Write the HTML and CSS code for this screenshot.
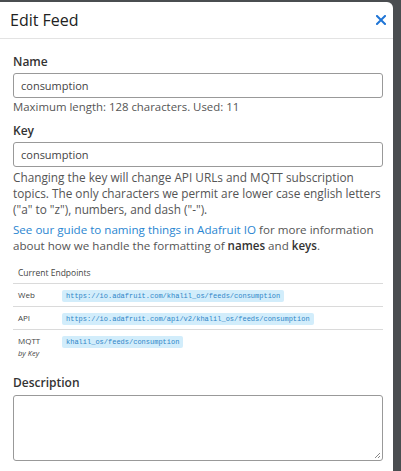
FILE: index.html
```html
<!DOCTYPE html>
<html>
<head>
<meta charset="utf-8">
<link rel="stylesheet" href="styles.css">
</head>
<body>
<div class="modal">
  <div class="modal-header">
    <h1 class="title">Edit Feed</h1>
    <button class="close" aria-label="Close">
      <svg width="10" height="10" viewBox="0 0 10 10"><path d="M1 1L9 9M9 1L1 9" stroke="#1f75d6" stroke-width="2" stroke-linecap="square"/></svg>
    </button>
  </div>
  <div class="modal-body">
    <label class="label">Name</label>
    <div class="input">consumption</div>
    <p class="help">Maximum length: 128 characters. Used: 11</p>

    <label class="label label-gap">Key</label>
    <div class="input">consumption</div>
    <p class="help para">Changing the key will change API URLs and MQTT subscription topics. The only characters we permit are lower case english letters ("a" to "z"), numbers, and dash ("-").</p>
    <p class="help para2"><a class="link">See our guide to naming things in Adafruit IO</a> for more information about how we handle the formatting of <b>names</b> and <b>keys</b>.</p>

    <div class="endpoints">
      <div class="caption">Current Endpoints</div>
      <div class="row">
        <div class="row-label">Web</div>
        <div><code class="chip">https://io.adafruit.com/khalil_os/feeds/consumption</code></div>
      </div>
      <div class="row">
        <div class="row-label">API</div>
        <div><code class="chip">https://io.adafruit.com/api/v2/khalil_os/feeds/consumption</code></div>
      </div>
      <div class="row row-last">
        <div class="row-label">MQTT<br><i>by Key</i></div>
        <div><code class="chip">khalil_os/feeds/consumption</code></div>
      </div>
    </div>

    <label class="label desc-label">Description</label>
    <div class="textarea">
      <svg class="grip" width="8" height="8" viewBox="0 0 8 8"><path d="M7 2L2 7M7 5L5 7" stroke="#888" stroke-width="1"/></svg>
    </div>
  </div>
</div>
</body>
</html>
```
FILE: styles.css
```css
html, body {
  margin: 0;
  padding: 0;
}
body {
  background: #4a4d50;
  font-family: "Open Sans", Lato, sans-serif;
  color: #333;
  height: 471px;
  overflow: hidden;
}
.modal {
  background: #fff;
  margin-top: 2px;
  margin-left: -6px;
  width: 399px;
  height: 480px;
  border-radius: 6px 6px 0 0;
}
.modal-header {
  height: 36px;
  display: flex;
  align-items: center;
  justify-content: space-between;
  padding: 0 7px 0 16px;
  border-bottom: 1px solid #e3e3e3;
}
.title {
  margin: 0;
  font-size: 16px;
  font-weight: 400;
  color: #222;
}
.close {
  border: 0;
  background: none;
  padding: 0;
  display: flex;
}
.modal-body {
  padding: 15px 10px 0 19px;
}
.label {
  display: block;
  font-size: 12px;
  line-height: 16px;
  font-weight: 600;
  color: #333;
}
.label-gap {
  margin-top: 8px;
}
.input {
  margin-top: 3px;
  height: 25px;
  box-sizing: border-box;
  border: 1px solid #999;
  border-radius: 3px;
  padding: 0 7px;
  font-size: 11px;
  line-height: 23px;
  color: #444;
}
.help {
  margin: 1px 0 0;
  font-size: 11.4px;
  line-height: 16px;
  color: #555;
}
.para {
  margin-top: 2px;
  font-size: 11.8px;
}
.para2 {
  margin-top: 5px;
  font-size: 11.6px;
}
.para2 b {
  font-weight: 600;
  color: #333;
}
.link {
  color: #2a86d1;
}
.endpoints {
  margin-top: 10px;
  font-size: 8.5px;
  color: #444;
}
.caption {
  padding: 0 5px;
  line-height: 18px;
  height: 19px;
}
.row {
  display: grid;
  grid-template-columns: 44px 1fr;
  border-top: 1px solid #dadada;
  padding: 5px 5px 4px;
  min-height: 12px;
}
.row-label {
  font-size: 8px;
  line-height: 12px;
  color: #444;
}
.row-label i {
  font-size: 7.5px;
}
.chip {
  display: inline-block;
  background: #d2edfb;
  color: #2f86c8;
  font-family: "Liberation Mono", "DejaVu Sans Mono", monospace;
  font-size: 7px;
  line-height: 12px;
  padding: 0 4px;
  border-radius: 2px;
}
.row-last {
  padding-bottom: 8px;
}
.desc-label {
  margin-top: 8px;
}
.textarea {
  margin-top: 4px;
  height: 66px;
  box-sizing: border-box;
  border: 1px solid #999;
  border-radius: 3px;
  position: relative;
}
.grip {
  position: absolute;
  right: 1px;
  bottom: 1px;
}
```
